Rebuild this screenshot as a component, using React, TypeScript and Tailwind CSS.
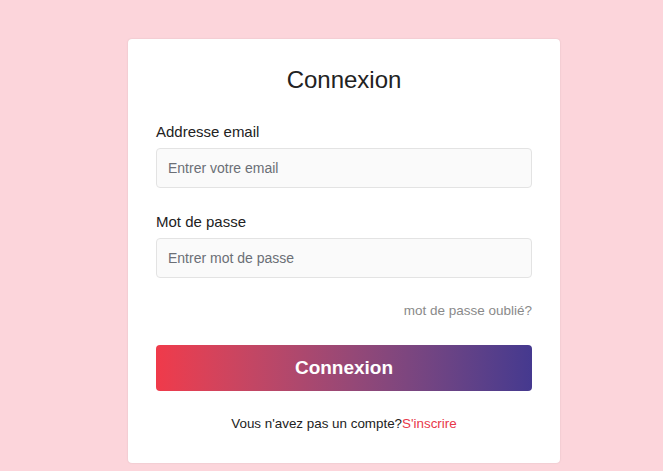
import React from "react";

export default function App() {
  return (
    <div
      className="min-h-[471px] w-full bg-[#fcd5db] pt-[39px] pl-[128px]"
      style={{ fontFamily: '"Liberation Sans", Arial, sans-serif' }}
    >
      <div className="w-[432px] rounded-[4px] bg-white px-[28px] pt-[25px] pb-[29px] shadow-[0_0_2px_rgba(0,0,0,0.12)]">
        <h1 className="text-center text-[24px] leading-[32px] text-[#222]">Connexion</h1>
        <div className="mt-[24px]">
          <label className="block text-[15px] leading-[24px] text-[#222]">Addresse email</label>
          <input
            className="mt-[4px] block h-[40px] w-full rounded-[4px] border border-[#e3e3e3] bg-[#fafafa] px-[11px] text-[14px] text-[#333] placeholder:text-[#6b6f76] outline-none"
            placeholder="Entrer votre email"
          />
        </div>
        <div className="mt-[22px]">
          <label className="block text-[15px] leading-[24px] text-[#222]">Mot de passe</label>
          <input
            type="password"
            className="mt-[4px] block h-[40px] w-full rounded-[4px] border border-[#e3e3e3] bg-[#fafafa] px-[11px] text-[14px] text-[#333] placeholder:text-[#6b6f76] outline-none"
            placeholder="Entrer mot de passe"
          />
        </div>
        <div className="mt-[23px] text-right text-[13.5px] leading-[20px] text-[#8a8a8a]">mot de passe oublié?</div>
        <button className="mt-[24px] flex h-[46px] w-full items-center justify-center rounded-[4px] bg-gradient-to-r from-[#f03a4a] to-[#45398f] text-[19px] font-semibold text-white">
          Connexion
        </button>
        <div className="mt-[23px] text-center text-[13.4px] leading-[20px] text-[#222]">
          Vous n'avez pas un compte?<span className="text-[#e8384a]">S'inscrire</span>
        </div>
      </div>
    </div>
  );
}
